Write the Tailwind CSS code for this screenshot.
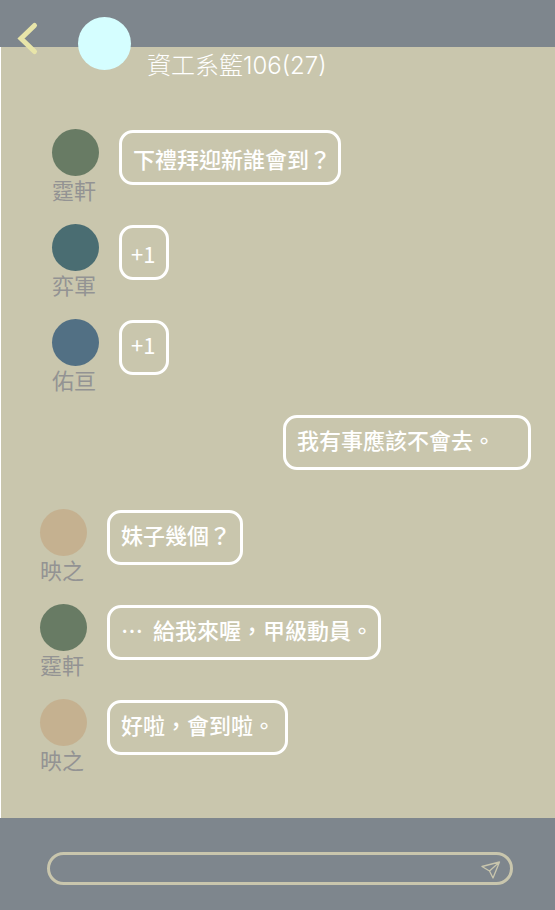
<!DOCTYPE html>
<html lang="zh-Hant">
<head>
<meta charset="utf-8">
<meta name="viewport" content="width=device-width, initial-scale=1">
<title>資工系籃106(27)</title>
<script src="https://cdn.jsdelivr.net/npm/@tailwindcss/browser@4"></script>
</head>
<body class="flex min-h-screen flex-col bg-[#c9c6ad] font-['Noto_Sans_CJK_TC',sans-serif] text-[22px] leading-6 text-white">
  <header class="flex h-[47px] shrink-0 items-start bg-[#7e868d] pl-4 pt-4">
    <button type="button" aria-label="返回" class="mt-1 h-10 w-6 shrink-0">
      <svg viewBox="0 0 24 40" class="h-10 w-6" fill="none" stroke="#e8e5a9" stroke-width="5" stroke-linecap="round" stroke-linejoin="miter"><path d="M18.5 5.5 5 18.5 18.5 31.5"/></svg>
    </button>
    <span class="ml-[38px] mt-px size-[53px] shrink-0 rounded-full bg-[#d5feff]"></span>
    <h1 class="ml-4 mt-[38px] whitespace-nowrap font-['Inter','Noto_Sans_CJK_TC',sans-serif] text-2xl leading-6 font-light">資工系籃106(27)</h1>
  </header>

  <main class="flex-1 border-l border-white pb-[43px] pt-[82px]">
    <ol class="flex flex-col gap-[19px]">
      <li class="flex h-[76px] items-start pl-[51px]">
        <div class="w-[67px] shrink-0">
          <span class="block size-[47px] rounded-full bg-[#687b64]"></span>
          <span class="mt-px block whitespace-nowrap leading-6 text-[#939393]">霆軒</span>
        </div>
        <p class="mt-px flex h-[55px] w-[222px] items-center whitespace-pre rounded-[14px] border-3 border-white px-[11px] font-medium">下禮拜迎新誰會到？</p>
      </li>
      <li class="flex h-[76px] items-start pl-[51px]">
        <div class="w-[67px] shrink-0">
          <span class="block size-[47px] rounded-full bg-[#4a6d72]"></span>
          <span class="mt-px block whitespace-nowrap leading-6 text-[#939393]">弈軍</span>
        </div>
        <p class="mt-px flex h-[55px] w-[50px] items-center whitespace-pre rounded-[14px] border-3 border-white px-[9px]">+1</p>
      </li>
      <li class="flex h-[76px] items-start pl-[51px]">
        <div class="w-[67px] shrink-0">
          <span class="block size-[47px] rounded-full bg-[#527084]"></span>
          <span class="mt-px block whitespace-nowrap leading-6 text-[#939393]">佑亘</span>
        </div>
        <p class="mt-px flex h-[55px] w-[50px] items-center whitespace-pre rounded-[14px] border-3 border-white px-[9px] pb-2">+1</p>
      </li>
      <li class="flex h-[76px] items-start justify-end pr-6">
        <p class="mt-px flex h-[55px] w-[248px] items-center whitespace-pre rounded-[14px] border-3 border-white px-[11px] pb-2 font-medium">我有事應該不會去。</p>
      </li>
      <li class="flex h-[76px] items-start pl-[39px]">
        <div class="w-[67px] shrink-0">
          <span class="block size-[47px] rounded-full bg-[#c5b190]"></span>
          <span class="mt-px block whitespace-nowrap leading-6 text-[#939393]">映之</span>
        </div>
        <p class="mt-px flex h-[55px] w-[136px] items-center whitespace-pre rounded-[14px] border-3 border-white px-[11px] pb-2 font-medium">妹子幾個？</p>
      </li>
      <li class="flex h-[76px] items-start pl-[39px]">
        <div class="w-[67px] shrink-0">
          <span class="block size-[47px] rounded-full bg-[#687b64]"></span>
          <span class="mt-px block whitespace-nowrap leading-6 text-[#939393]">霆軒</span>
        </div>
        <p class="mt-px flex h-[55px] w-[274px] items-center whitespace-pre rounded-[14px] border-3 border-white px-[11px] pb-2 font-medium">…  給我來喔，甲級動員。</p>
      </li>
      <li class="flex h-[76px] items-start pl-[39px]">
        <div class="w-[67px] shrink-0">
          <span class="block size-[47px] rounded-full bg-[#c5b190]"></span>
          <span class="mt-px block whitespace-nowrap leading-6 text-[#939393]">映之</span>
        </div>
        <p class="mt-px flex h-[55px] w-[181px] items-center whitespace-pre rounded-[14px] border-3 border-white px-[11px] pb-2 font-medium">好啦，會到啦。</p>
      </li>
    </ol>
  </main>

  <footer class="h-[92px] shrink-0 bg-[#7e868d] pl-[47px] pr-[42px] pt-[34px]">
    <form class="flex h-[33px] items-center rounded-full border-3 border-[#c9c6ad] pl-4 pr-[7px]">
      <input type="text" aria-label="輸入訊息" class="h-6 min-w-0 flex-1 bg-transparent text-base text-white outline-none">
      <button type="button" aria-label="傳送" class="size-6 shrink-0">
        <svg viewBox="0 0 24 24" class="size-6" fill="none" stroke="#c9c6ad" stroke-width="1.3" stroke-linejoin="round"><path d="M20.5 5 3 9.500 10.5 14 14 21ZM20.5 5 10.5 14"/></svg>
      </button>
    </form>
  </footer>
</body>
</html>
